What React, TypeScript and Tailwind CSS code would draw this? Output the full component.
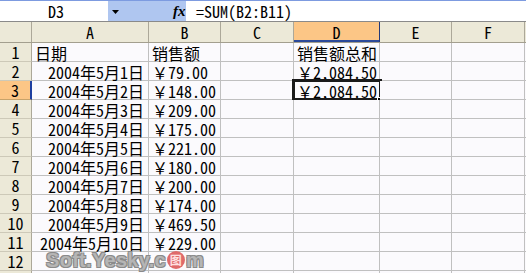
import React from "react";

const FONT = "font-['Noto_Sans_Mono_CJK_SC','Noto_Sans_CJK_SC','Liberation_Mono',monospace]";

const COLS = [
  { key: "A", w: "w-[117px]" },
  { key: "B", w: "w-[72px]" },
  { key: "C", w: "w-[73px]" },
  { key: "D", w: "w-[86px]" },
  { key: "E", w: "w-[72px]" },
  { key: "F", w: "w-[73px]" },
];

const amounts = ["79.00", "148.00", "209.00", "175.00", "221.00", "180.00", "200.00", "174.00", "469.50", "229.00"];

type Cell = { text: string; right?: boolean };

function rowData(r: number): Record<string, Cell> {
  if (r === 1) return { A: { text: "日期" }, B: { text: "销售额" }, D: { text: "销售额总和" } };
  if (r >= 2 && r <= 11) {
    const d: Record<string, Cell> = {
      A: { text: `2004年5月${r - 1}日`, right: true },
      B: { text: `￥${amounts[r - 2]}` },
    };
    if (r === 2 || r === 3) d.D = { text: "￥2,084.50" };
    return d;
  }
  return {};
}

function FormulaBar() {
  return (
    <div className="flex h-[22px] border-t border-t-[#7d9be0] border-b border-b-[#8a8a8a] bg-white">
      <div className="flex w-[108px] items-center justify-center pl-[4px] text-[16px] leading-none text-black">D3</div>
      <div className="relative flex w-[78px] items-center bg-[#afc6f0]">
        <svg width="7" height="4" viewBox="0 0 7 4" className="absolute left-[4px] top-[9px]">
          <path d="M0 0h7L3.5 4z" fill="#000" />
        </svg>
        <span className="absolute left-[65px] top-[1px] font-['Liberation_Serif',serif] text-[15px] font-bold italic leading-[18px] text-black">
          fx
        </span>
      </div>
      <div className="flex flex-1 items-center pl-[10px] text-[16px] leading-none text-black">=SUM(B2:B11)</div>
    </div>
  );
}

function HeaderRow() {
  return (
    <div className="flex h-[21px] border-b border-b-[#a39f8f] bg-[#ece9d8]">
      <div className="w-[32px] shrink-0 border-r border-r-[#aca899]" />
      {COLS.map((c) => (
        <div
          key={c.key}
          className={`${c.w} shrink-0 flex items-center justify-center border-r text-[16px] leading-none text-black ${
            c.key === "D" ? "border-r-[#23397a] bg-[#fcc686] shadow-[inset_0_-2px_0_#2c4a9a]" : "border-r-[#aca899]"
          }`}
        >
          {c.key}
        </div>
      ))}
      <div className="flex-1" />
    </div>
  );
}

function GridRow({ r }: { r: number }) {
  const data = rowData(r);
  const selected = r === 3;
  return (
    <div className="flex h-[19px] shrink-0">
      <div
        className={`w-[32px] shrink-0 flex items-center justify-center border-b text-[16px] leading-none text-black ${
          selected
            ? "border-b-[#c8a36a] bg-[#fcc686] border-r-2 border-r-[#1e3fa0]"
            : "border-b-[#cdc9b8] bg-[#ece9d8] border-r border-r-[#aca899]"
        }`}
      >
        {r < 13 ? r : ""}
      </div>
      {COLS.map((c) => {
        const cell = data[c.key];
        const active = selected && c.key === "D";
        return (
          <div
            key={c.key}
            className={`${c.w} relative shrink-0 flex items-center overflow-visible whitespace-nowrap border-r border-b border-[#c0c0c0] bg-[#fbfafd] pt-[1px] text-[16px] leading-none text-black ${
              cell?.right ? "justify-end pr-[4px]" : "pl-[3px]"
            }`}
          >
            {cell?.text}
            {active && (
              <>
                <div className="pointer-events-none absolute -left-[2px] -top-[2px] h-[22px] w-[90px] border-[3px] border-[#1a1a1a]" />
                <div className="absolute -bottom-[4px] -right-[4px] h-[6px] w-[6px] border border-white bg-black" />
              </>
            )}
          </div>
        );
      })}
      <div className="flex-1 border-b border-[#c0c0c0] bg-[#fbfafd]" />
    </div>
  );
}

export default function App() {
  const rows = Array.from({ length: 13 }, (_, i) => i + 1);
  return (
    <div className={`relative h-[273px] w-[526px] overflow-hidden bg-white ${FONT}`}>
      <FormulaBar />
      <HeaderRow />
      {rows.map((r) => (
        <GridRow key={r} r={r} />
      ))}
      <div className="absolute left-[46px] top-[250px] flex items-center font-['Liberation_Sans',sans-serif] text-[20px] font-bold leading-none tracking-[0.3px] text-[#b5b5b5] [text-shadow:1px_1px_0_#8a8a8a,-1px_-1px_0_#8a8a8a,1px_-1px_0_#8a8a8a,-1px_1px_0_#8a8a8a,0_0_3px_#fff]">
        Soft.Yesky.c
        <span className="mx-[1px] flex h-[18px] w-[18px] items-center justify-center rounded-full bg-[#e06a6a] font-['Noto_Sans_CJK_SC',sans-serif] text-[12px] font-bold text-[#ffe0e0] [text-shadow:none]">
          图
        </span>
        m
      </div>
    </div>
  );
}
